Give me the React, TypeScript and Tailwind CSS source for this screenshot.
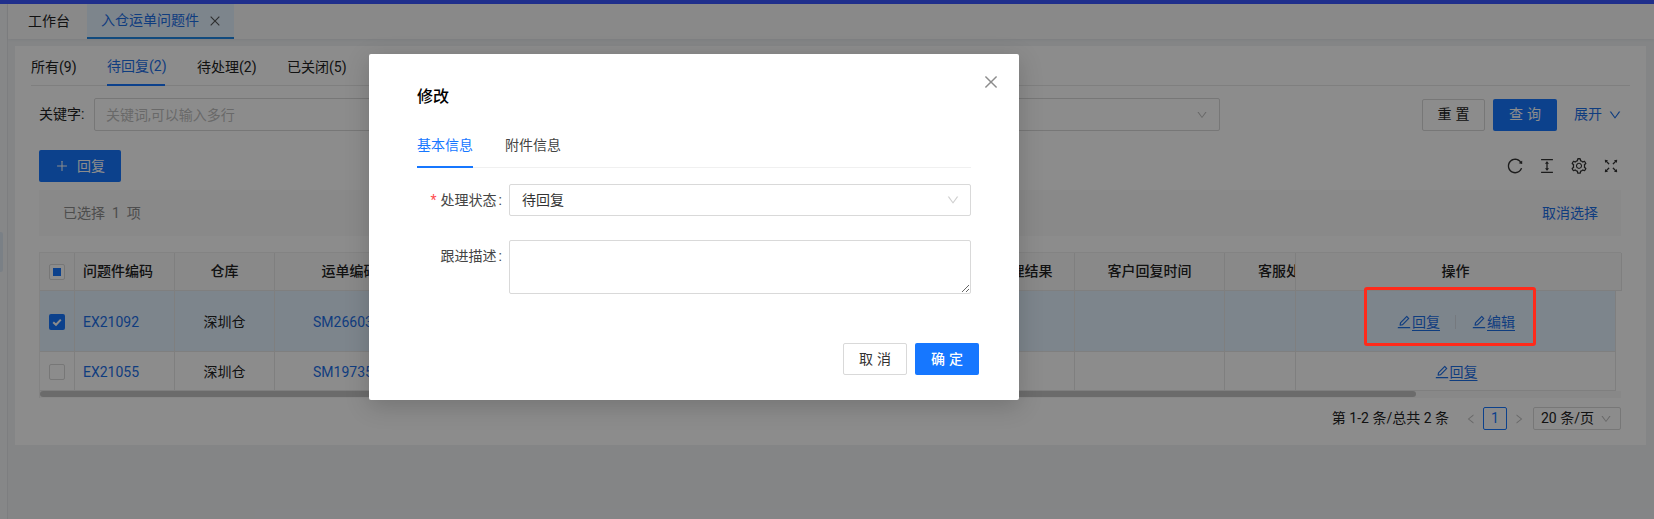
import React from 'react';
import {
  AiOutlineClose,
  AiOutlineColumnHeight,
  AiOutlineDown,
  AiOutlineEdit,
  AiOutlineFullscreen,
  AiOutlineLeft,
  AiOutlinePlus,
  AiOutlineReload,
  AiOutlineRight,
  AiOutlineSetting,
} from 'react-icons/ai';

const pageTabs = [
  { label: '所有(9)', width: 'w-[44px]', active: false },
  { label: '待回复(2)', width: 'w-[58px]', active: true },
  { label: '待处理(2)', width: 'w-[58px]', active: false },
  { label: '已关闭(5)', width: 'w-[58px]', active: false },
];

const Cell = ({ className = '', children }: { className?: string; children?: React.ReactNode }) => (
  <div className={`flex h-full shrink-0 items-center justify-center border-r border-[#e8e8e8] ${className}`}>{children}</div>
);

const Check = ({ state }: { state: 'none' | 'some' | 'all' }) => {
  if (state === 'all') {
    return (
      <span className="flex h-4 w-4 items-center justify-center rounded-[2px] bg-[#1677ff]">
        <svg viewBox="0 0 12 12" className="h-3 w-3" fill="none" stroke="white" strokeWidth="2">
          <path d="M2.2 6.2 5 8.8 9.8 3.6" />
        </svg>
      </span>
    );
  }
  return (
    <span className="flex h-4 w-4 items-center justify-center rounded-[2px] border border-[#d9d9d9] bg-white">
      {state === 'some' && <span className="h-2 w-2 bg-[#1677ff]" />}
    </span>
  );
};

const RowAction = ({ label }: { label: string }) => (
  <a className="flex items-center text-[14px] text-[#1d6fe8] underline decoration-1 underline-offset-[3px]">
    <AiOutlineEdit className="h-4 w-4" />
    {label}
  </a>
);

const TableRow = ({
  selected,
  code,
  waybill,
  children,
}: {
  selected: boolean;
  code: string;
  waybill: string;
  children: React.ReactNode;
}) => (
  <div className={`flex w-[1576px] border-b border-[#e8e8e8] ${selected ? 'h-[61px] bg-[#e3f2ff]' : 'h-[39px] bg-white'}`}>
    <Cell className="w-[35px] pt-[2px]">
      <Check state={selected ? 'all' : 'none'} />
    </Cell>
    <Cell className="w-[100px] !justify-start pl-[8px] pt-[2px] text-[#1d6fe8]">{code}</Cell>
    <Cell className="w-[100px] pt-[2px]">深圳仓</Cell>
    <Cell className="w-[150px] !justify-start pl-[38px] pt-[2px] text-[#1d6fe8]">{waybill}</Cell>
    <Cell className="w-[550px]" />
    <Cell className="w-[100px]" />
    <Cell className="w-[150px]" />
    <Cell className="w-[71px]" />
    <Cell className="w-[320px] pt-[2px]">{children}</Cell>
  </div>
);

const App = () => {
  return (
    <div className="relative h-[519px] w-[1654px] overflow-hidden bg-[#f0f2f5] font-['Roboto','Noto_Sans_CJK_SC',sans-serif] text-[14px] text-[#222]">
      {/* Top stripe */}
      <div className="h-1 bg-[#3a56ff]" />

      <div className="flex h-[515px]">
        <div className="w-[8px] shrink-0 border-r border-[#e4e6e9] bg-[#f5f6f8]" />

        <div className="flex min-w-0 flex-1 flex-col">
          {/* Page tabs */}
          <div className="flex h-[35px] shrink-0 bg-[#fafafa] pl-[20px] shadow-[0_1px_3px_rgba(0,0,0,0.05)]">
            <div className="flex w-[59px] items-center">工作台</div>
            <div className="flex w-[147px] items-center gap-[9px] border-b-2 border-[#1e88e5] bg-[#e3f2ff] pl-[14px] text-[#1d6fe8]">
              入仓运单问题件
              <AiOutlineClose className="h-[14px] w-[14px] text-[#555]" />
            </div>
          </div>

          <div className="ml-[7px] mr-[8px] mt-[7px] h-[399px] bg-white px-[16px]">
            {/* Status tabs */}
            <div className="flex h-[40px] gap-[32px] border-b border-[#e8e8e8]">
              {pageTabs.map((tab) => (
                <div
                  key={tab.label}
                  className={`flex h-[40px] items-center whitespace-nowrap pt-[3px] ${tab.width} ${
                    tab.active ? 'border-b-2 border-[#1677ff] text-[#1d6fe8]' : ''
                  }`}
                >
                  {tab.label}
                </div>
              ))}
            </div>

            <div className="ml-[8px] mr-[9px]">
              {/* Filters */}
              <div className="mt-[12px] flex h-[33px] items-center">
                <span className="w-[55px] shrink-0">关键字:</span>
                <input
                  placeholder="关键词,可以输入多行"
                  className="h-full w-[500px] rounded-[2px] border border-[#d9d9d9] bg-white px-[11px] outline-none placeholder:text-[#bfbfbf]"
                />
                <div className="ml-[126px] flex h-full w-[500px] items-center justify-end rounded-[2px] border border-[#d9d9d9] pr-[11px]">
                  <AiOutlineDown className="h-3 w-3 text-[#bfbfbf]" />
                </div>
                <button className="ml-auto h-[32px] w-[63px] rounded-[2px] border border-[#d9d9d9] bg-white pl-[4px] tracking-[4px]">重置</button>
                <button className="ml-[8px] h-[32px] w-[64px] rounded-[2px] bg-[#1677ff] pl-[4px] tracking-[4px] text-white">查询</button>
                <span className="ml-[17px] flex w-[47px] shrink-0 items-center gap-[6px] whitespace-nowrap text-[#1d6fe8]">
                  展开
                  <AiOutlineDown className="h-[14px] w-[14px] shrink-0" />
                </span>
              </div>

              {/* Toolbar */}
              <div className="mt-[19px] flex h-[32px] items-center">
                <button className="flex h-full w-[82px] items-center justify-center gap-[8px] rounded-[2px] bg-[#1677ff] text-white">
                  <AiOutlinePlus className="h-[14px] w-[14px]" />
                  回复
                </button>
                <div className="ml-auto flex items-center gap-[14px] pr-[1px] text-[#333]">
                  <AiOutlineReload className="h-[18px] w-[18px]" />
                  <AiOutlineColumnHeight className="h-[18px] w-[18px]" />
                  <AiOutlineSetting className="h-[18px] w-[18px]" />
                  <AiOutlineFullscreen className="h-[18px] w-[18px]" />
                </div>
              </div>

              {/* Selection summary */}
              <div className="mt-[8px] flex h-[46px] items-center justify-between bg-[#fafafa] pl-[24px] pr-[23px]">
                <span className="text-[#8c8c8c]">已选择 &nbsp;1&nbsp; 项</span>
                <a className="text-[#1d6fe8]">取消选择</a>
              </div>

              {/* Table */}
              <div className="mt-[16px] w-[1582px] border-l border-t border-[#eeeeee]">
                <div className="flex h-[38px] w-[1582px] overflow-hidden border-b border-[#e8e8e8] bg-[#fafafa] font-medium">
                  <Cell className="w-[35px]">
                    <Check state="some" />
                  </Cell>
                  <Cell className="w-[100px] !justify-start pl-[8px]">问题件编码</Cell>
                  <Cell className="w-[100px]">仓库</Cell>
                  <Cell className="w-[150px]">运单编码</Cell>
                  <Cell className="w-[550px]" />
                  <Cell className="w-[100px]">处理结果</Cell>
                  <Cell className="w-[150px]">客户回复时间</Cell>
                  <Cell className="w-[71px] overflow-hidden !justify-start whitespace-nowrap pl-[33px]">客服处理时间</Cell>
                  <Cell className="w-[326px] pr-[6px]">操作</Cell>
                </div>
                <TableRow selected code="EX21092" waybill="SM266030">
                  <RowAction label="回复" />
                  <span className="mx-[15px] h-[14px] w-px bg-[#d5dde5]" />
                  <RowAction label="编辑" />
                </TableRow>
                <TableRow selected={false} code="EX21055" waybill="SM197350">
                  <RowAction label="回复" />
                </TableRow>
                {/* Horizontal scrollbar */}
                <div className="h-[7px] bg-[#f8f8f8]">
                  <div className="h-[6px] w-[1376px] rounded-[3px] bg-[#c4c4c4]" />
                </div>
              </div>

              {/* Pagination */}
              <div className="mt-[9px] flex h-[23px] items-center justify-end">
                <span>第 1-2 条/总共 2 条</span>
                <AiOutlineLeft className="ml-[16px] h-3 w-3 text-[#bfbfbf]" />
                <span className="ml-[6px] flex h-[23px] w-[24px] items-center justify-center rounded-[2px] border border-[#1677ff] text-[#1677ff]">1</span>
                <AiOutlineRight className="ml-[6px] h-3 w-3 text-[#bfbfbf]" />
                <div className="ml-[8px] flex h-[23px] w-[88px] items-center justify-between rounded-[2px] border border-[#d9d9d9] pl-[7px] pr-[8px]">
                  20 条/页
                  <AiOutlineDown className="h-3 w-3 text-[#bfbfbf]" />
                </div>
              </div>
            </div>
          </div>
        </div>
      </div>

      {/* Sidebar handle */}
      <div className="absolute left-0 top-[232px] h-[40px] w-[3px] rounded-r-[2px] bg-[#dfeaf5]" />

      {/* Mask */}
      <div className="absolute inset-0 bg-black/45" />

      {/* Dialog */}
      <div className="absolute left-[369px] top-[54px] h-[346px] w-[650px] rounded-[2px] bg-white px-[48px] pt-[31px] shadow-[0_6px_24px_rgba(0,0,0,0.18)]">
        <AiOutlineClose className="absolute right-[19px] top-[19px] h-[18px] w-[18px] text-[#8c8c8c]" />
        <div className="h-[24px] text-[16px] font-medium leading-[24px] text-black">修改</div>

        <div className="mt-[22px] flex h-[37px] w-[554px] gap-[32px] border-b border-[#f0f0f0]">
          <div className="h-[37px] w-[56px] border-b-2 border-[#1677ff] pt-[4px] text-[#1677ff]">基本信息</div>
          <div className="pt-[4px] text-[#444]">附件信息</div>
        </div>

        <div className="mt-[16px] flex w-[554px] items-center">
          <label className="w-[92px] shrink-0 pr-[7px] text-right text-[#444]">
            <span className="mr-[4px] text-[#ff4d4f]">*</span>处理状态<span className="ml-[2px]">:</span>
          </label>
          <div className="flex h-[32px] flex-1 items-center justify-between rounded-[2px] border border-[#d9d9d9] pl-[12px] pr-[10px] text-[#333]">
            待回复
            <AiOutlineDown className="h-[14px] w-[14px] text-[#d0d0d0]" />
          </div>
        </div>

        <div className="mt-[24px] flex w-[554px]">
          <label className="w-[92px] shrink-0 pr-[7px] pt-[6px] text-right text-[#444]">
            跟进描述<span className="ml-[2px]">:</span>
          </label>
          <textarea className="block h-[54px] flex-1 rounded-[2px] border border-[#d9d9d9] outline-none" />
        </div>

        <div className="absolute bottom-[25px] right-[40px] flex gap-[8px]">
          <button className="h-[32px] w-[64px] rounded-[2px] border border-[#d9d9d9] bg-white pl-[4px] tracking-[4px] text-[#333]">取消</button>
          <button className="h-[32px] w-[64px] rounded-[2px] bg-[#1677ff] pl-[4px] font-medium tracking-[4px] text-white">确定</button>
        </div>
      </div>

      {/* Red annotation */}
      <div className="absolute left-[1364px] top-[287px] h-[59px] w-[172px] rounded-[3px] border-[3px] border-[#ff2a1a]" />
    </div>
  );
};

export default App;
